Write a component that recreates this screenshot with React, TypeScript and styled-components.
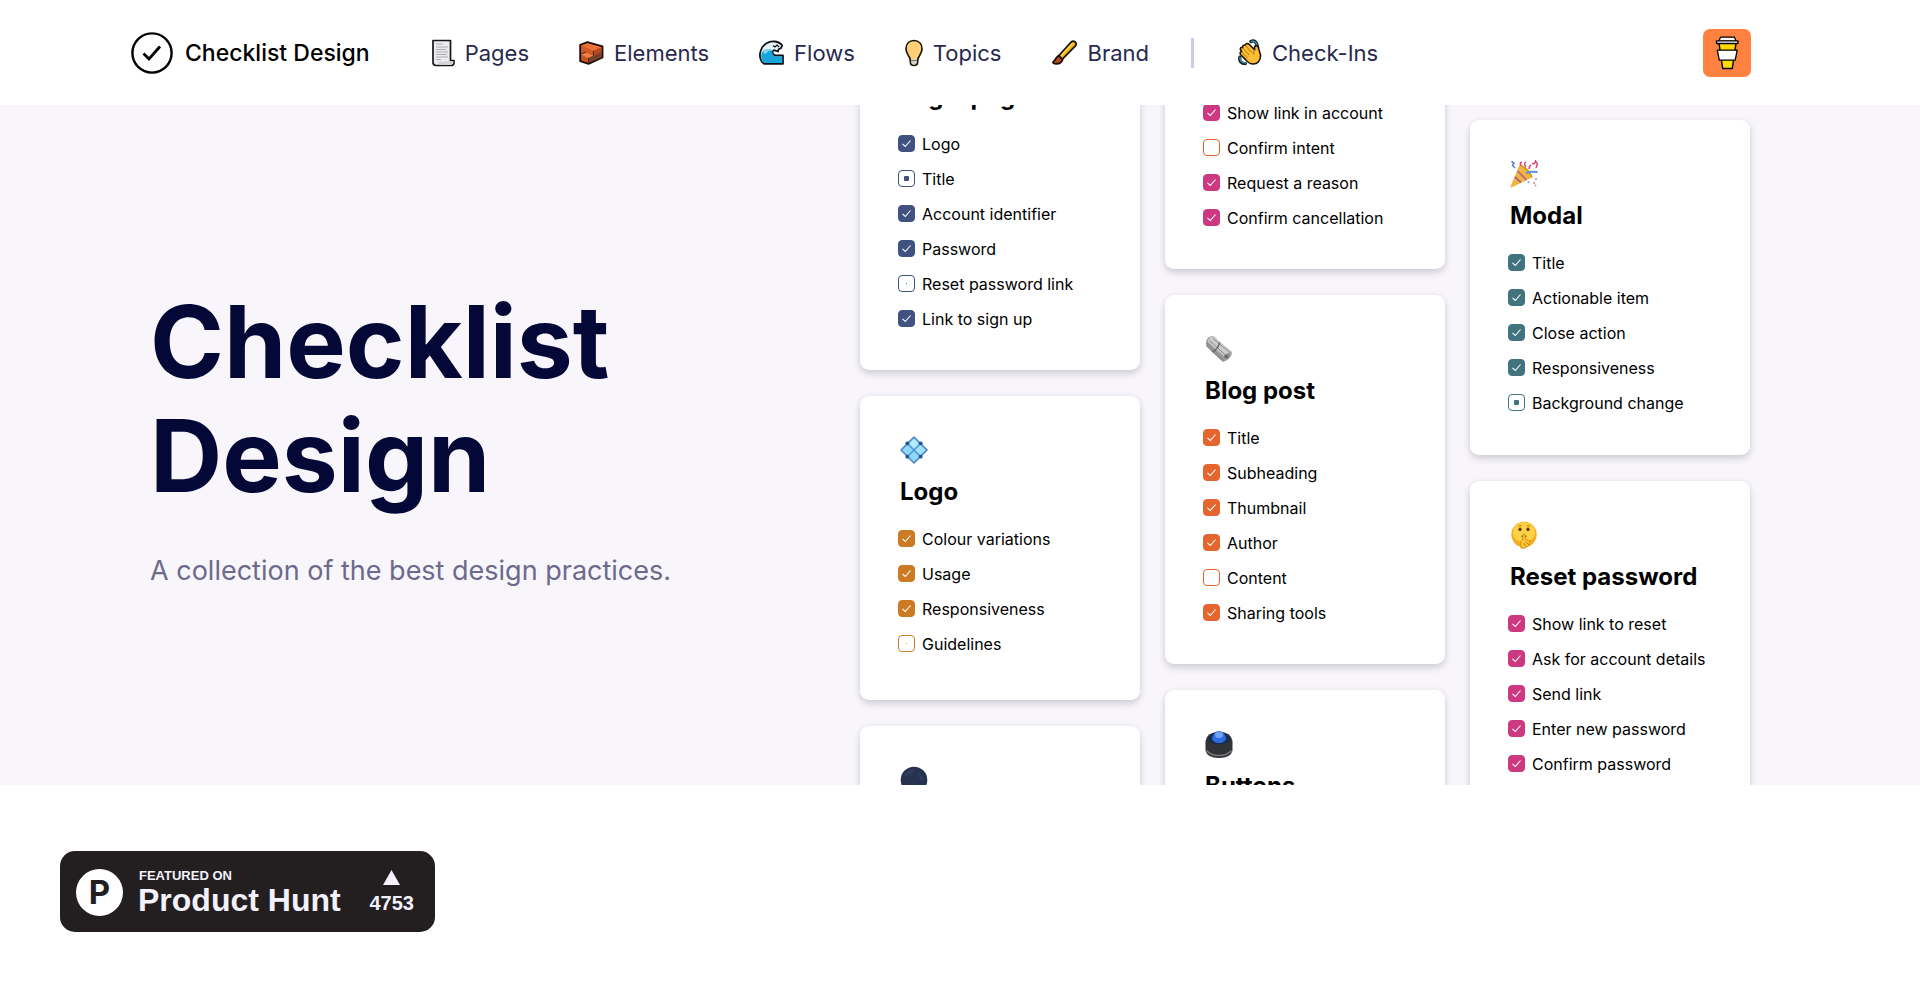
import React, { useId, type ReactNode } from "react";
import styled, { createGlobalStyle } from "styled-components";

const GlobalStyle = createGlobalStyle`
  *, *::before, *::after { box-sizing: border-box; }
  body {
    margin: 0;
    background: #fff;
    color: #000;
    font-family: Inter, "Liberation Sans", sans-serif;
  }
`;

const Page = styled.div`
  display: flex;
  flex-direction: column;
  height: 100vh;
  min-height: 800px;
`;

/* ---------- header ---------- */

const Header = styled.header`
  display: flex;
  align-items: center;
  flex: none;
  height: 105px;
  padding: 0 169px 0 131px;
  background: #fff;
`;

const Brand = styled.a`
  display: flex;
  align-items: center;
  gap: 12px;
  margin-right: 62px;
  color: #000;
  font-size: 23px;
  font-weight: 500;
  line-height: 32px;
  text-decoration: none;
  white-space: nowrap;
`;

const Nav = styled.nav`
  display: flex;
  align-items: center;
  gap: 50px;
`;

const NavLink = styled.a`
  display: flex;
  align-items: center;
  gap: 10px;
  color: #27294f;
  font-size: 22px;
  line-height: 32px;
  text-decoration: none;
  white-space: nowrap;
`;

const Divider = styled.span`
  width: 3px;
  height: 30px;
  margin: 0 -6px 0 -8px;
  background: #cdc8f1;
`;

const CoffeeButton = styled.button`
  display: grid;
  place-items: center;
  width: 48px;
  height: 48px;
  margin-left: auto;
  padding: 0;
  border: 0;
  border-radius: 7px;
  background: #ff813f;
  cursor: pointer;
`;

/* ---------- hero ---------- */

const Hero = styled.main`
  display: grid;
  grid-template-columns: minmax(0, 71fr) minmax(0, 89fr);
  flex: 1;
  min-height: 0;
  padding: 0 170px 0 150px;
  overflow: hidden;
  background: #f8f6fb;
`;

const Intro = styled.section`
  display: flex;
  flex-direction: column;
  justify-content: center;
  gap: 42px;
  height: 100%;
  padding-bottom: 18px;
`;

const Title = styled.h1`
  max-width: 560px;
  margin: 0;
  color: #040836;
  font-size: 100px;
  font-weight: 700;
  line-height: 114px;
`;

const Tagline = styled.p`
  margin: 0;
  color: #6c6a8c;
  font-size: 27px;
  line-height: 32px;
`;

const Board = styled.div`
  display: grid;
  grid-template-columns: repeat(3, minmax(0, 1fr));
  align-items: start;
  gap: 25px;
  height: 100%;
  min-height: 0;
`;

const Column = styled.div<{ $shift: number }>`
  display: flex;
  flex-direction: column;
  gap: 26px;
  margin-top: ${(p) => p.$shift}px;
`;

const Card = styled.article<{ $minHeight?: number }>`
  min-height: ${(p) => p.$minHeight ?? 0}px;
  padding: 40px 16px 34px 38px;
  border-radius: 9px;
  background: #fff;
  box-shadow: 0 4px 7px rgba(30, 25, 50, 0.16), 0 0 6px rgba(30, 25, 50, 0.05);
`;

const CardIcon = styled.div`
  height: 28px;
  padding-left: 2px;
`;

const CardTitle = styled.h2`
  margin: 12px 0 13px;
  padding-left: 2px;
  font-size: 24px;
  font-weight: 700;
  line-height: 32px;
  white-space: nowrap;
`;

const List = styled.ul`
  margin: 0;
  padding: 0;
  list-style: none;
`;

const Row = styled.li`
  display: flex;
  align-items: center;
  gap: 7px;
  height: 35px;
`;

const RowLabel = styled.label`
  font-size: 16px;
  line-height: 24px;
  white-space: nowrap;
`;

const BoxWrap = styled.span`
  display: grid;
  place-items: center;
  width: 17px;
  height: 17px;

  & > * {
    grid-area: 1 / 1;
  }
  & > svg {
    pointer-events: none;
  }
`;

const Box = styled.input<{ $color: string; $filled: boolean }>`
  appearance: none;
  width: 17px;
  height: 17px;
  margin: 0;
  border: 1px solid ${(p) => p.$color};
  border-radius: 4px;
  background: ${(p) => (p.$filled ? p.$color : "#fff")};
`;

const Core = styled.i<{ $color: string; $size: number }>`
  width: ${(p) => p.$size}px;
  height: ${(p) => p.$size}px;
  border-radius: 1px;
  background: ${(p) => p.$color};
  pointer-events: none;
`;

/* ---------- footer badge ---------- */

const Footer = styled.footer`
  display: flex;
  flex: none;
  padding: 66px 60px 60px;
  background: #fff;
`;

const Badge = styled.a`
  display: flex;
  align-items: center;
  width: 375px;
  height: 81px;
  padding: 2px 21px 0 16px;
  border-radius: 15px;
  background: #231f20;
  color: #f3f1fb;
  font-family: "Liberation Sans", Arial, sans-serif;
  font-weight: 700;
  text-decoration: none;
`;

const BadgeLogo = styled.span`
  display: grid;
  place-items: center;
  width: 47px;
  height: 47px;
  border-radius: 50%;
  background: #fff;
  color: #231f20;
  font-family: Inter, sans-serif;
  font-size: 33px;
  line-height: 47px;
`;

const BadgeText = styled.span`
  display: flex;
  flex-direction: column;
  margin-left: 15px;
  white-space: nowrap;
`;

const BadgeSmall = styled.span`
  padding-left: 1px;
  font-size: 13px;
  line-height: 15px;
`;

const BadgeName = styled.span`
  font-size: 32px;
  line-height: 34px;
`;

const Votes = styled.span`
  display: flex;
  flex-direction: column;
  align-items: center;
  gap: 6px;
  margin-left: auto;
  font-size: 20px;
  line-height: 24px;
`;

/* ---------- drawings ---------- */

const LogoMark = () => (
  <svg width="42" height="42" viewBox="0 0 42 42" fill="none" stroke="#000" aria-hidden="true">
    <circle cx="21" cy="21" r="19.6" strokeWidth="2.4" />
    <path d="M12.500 21.500l5.500 5.500L29 14.500" strokeWidth="2.800" />
  </svg>
);

const PageIcon = () => (
  <svg width="23" height="28" viewBox="1 0 23 28" aria-hidden="true">
    <path d="M2 1.500h17.500v20H23v2.500q-.5 2.500-3 2.500H5q-3 0-3-3z" fill="#ececef" stroke="#16161a" strokeWidth="1.700" strokeLinejoin="round" />
    <path d="M7.500 22.500H22.500q0 3.500-3.500 3.500H9q-1.500-1-1.500-3.500z" fill="#d2d2d6" />
    <path d="M5 5h7M5 8h12M5 10.500h10M5 13h12M5 15.500h11M5 18h12M5 20.500h5" stroke="#adadb2" strokeWidth="1" />
  </svg>
);

const BrickIcon = () => (
  <svg width="25" height="24" viewBox="0 0 25 24" strokeLinejoin="round" aria-hidden="true">
    <path d="M1.200 4L8.500 1.200l15 4.300v11L9.500 22.800l-8.300-2.600z" fill="#c9521f" stroke="#1d0f0b" strokeWidth="1.900" />
    <path d="M2 4.500l6.500-2.300 14 4-8 3.800z" fill="#ea7238" />
    <path d="M2 5l12.500 5v4.500L8 11.500l-6 1.800z" fill="#d05a26" />
    <path d="M14.500 10l8-3.800v4.500l-8 4.200z" fill="#b44a1f" />
    <path d="M2 13.600l5-2 7 3-5 2.400z" fill="#f08048" />
    <path d="M9.500 17l13-5.800V16L9.500 21.800z" fill="#74402d" />
    <path d="M1.200 13l5.800-2M14.500 10v4.500M9.500 17v5.500" fill="none" stroke="#45200f" strokeWidth=".9" />
  </svg>
);

const WaveIcon = () => (
  <svg width="25" height="25" viewBox="0 0 25 25" strokeLinejoin="round" aria-hidden="true">
    <path d="M24 23.800H5C1 21 0 15.500 1.800 10.500 4 4 10 .6 16 1.500q5 .7 7.200 4l-1.400 2.800-2 .7-.8 2.500-4.200-1.300c-2.600 1.600-1 5 2 5.300h7.200z" fill="#e6f2f8" stroke="#101418" strokeWidth="1.800" />
    <path d="M23.200 23H5.500C2 20.300 1.500 15.500 3 12.500c2-3.800 7-4 10.500-2-1 3.200.5 5.500 3.700 6h6z" fill="#17a3dc" />
    <path d="M3.500 11.500c2-3 6-3 9.500-1-3 0-5.500 1.500-6 4z" fill="#7ed2f0" />
    <path d="M14 5.500l2 1.500 2-2 2 2" fill="none" stroke="#101418" strokeWidth="1.100" />
  </svg>
);

const BulbIcon = () => (
  <svg width="18" height="28" viewBox="1 0 18 28" aria-hidden="true">
    <path d="M10 1.500c5.200 0 8 3.700 8 8.500 0 3.600-2.100 6-3.500 8.500-.8 1.500-.9 3-.9 4.500 0 2.200-1.300 3.500-3.600 3.500S6.400 25.200 6.400 23c0-1.500-.1-3-.9-4.500C4.100 16 2 13.600 2 10c0-4.800 2.800-8.500 8-8.500z" fill="#ffd078" stroke="#17130a" strokeWidth="1.700" />
    <path d="M7.200 20h5.600v3q-.5 2.500-2.800 2.500T7.200 23z" fill="#d3d1c9" />
    <path d="M7.200 21.500h5.600" stroke="#77736a" />
  </svg>
);

const BrushIcon = () => (
  <svg width="26" height="27" viewBox="0 0 28 28" strokeLinejoin="round" aria-hidden="true">
    <path d="M22 2.500q2-1.500 4 .2t.5 4L12 21.500 8 18z" fill="#f9b71c" stroke="#1b1208" strokeWidth="1.900" />
    <path d="M8 17.500l4.500 4c-1 3.500-4.500 5-8.500 4.500-2-.3-2.500-1.500-1-2.500 2-1.500 2-4 5-6z" fill="#b84a20" stroke="#1b1208" strokeWidth="1.900" />
    <path d="M22.500 4.500L11 17" stroke="#ffdc6b" strokeWidth="1.300" />
  </svg>
);

const HandIcon = () => (
  <svg width="24" height="27" viewBox="0 0 26 28" strokeLinejoin="round" strokeLinecap="round" aria-hidden="true">
    <path d="M14 2q4-2 6 2.500t1 5M2 19q-1 7 6 7" fill="none" stroke="#10242b" strokeWidth="3.600" />
    <path d="M14.500 2q4-1 5.500 2.500t1 5M2 19q0 6 6 6.500" fill="none" stroke="#4193a5" strokeWidth="1.400" />
    <path d="M2.500 10.500q0-2.500 2.500-2 0-3 3-2.500 1-3 4-1l6 6V7.500q3-2 4 1l2.500 8.500c0 6-3.500 9.500-8 9.500-4 0-6-2-8-4.500L3 16.500q-2-2.500 1-3.500z" fill="#fdbd33" stroke="#191307" strokeWidth="1.700" />
    <path d="M5 9l7 7.500M8 6.500l7 7.500M4 13.500l6 6M18 11q-2 3-1 5" fill="none" stroke="#a66d12" strokeWidth="1" />
  </svg>
);

const CupIcon = () => (
  <svg width="24" height="34" viewBox="0 0 24 34" stroke="#000" strokeLinejoin="round" aria-hidden="true">
    <path d="M4 7h17l-3.700 25.500H7.700z" fill="#ffdd00" strokeWidth="1.400" />
    <path d="M5.500 1.200h14L21 5H4z" fill="#fff" strokeWidth="1.200" />
    <path d="M1.500 4.800h21.500v2.700H1.500z" fill="#fff" strokeWidth="1.300" />
    <path d="M2.300 14.200h19.900l-2 10H4.300z" fill="#fff" strokeWidth="1.300" />
  </svg>
);

const CardSvg = ({ children }: { children: ReactNode }) => (
  <svg width="28" height="28" viewBox="0 0 28 28" aria-hidden="true">{children}</svg>
);

const DiamondIcon = () => (
  <CardSvg>
    <path d="M14 1L27 14 14 27 1 14z" fill="#8fd8f8" stroke="#4b86c8" strokeWidth="1.600" strokeLinejoin="round" />
    <path d="M7.500 7.500l13 13M20.500 7.500l-13 13" stroke="#4f94d0" strokeWidth="1.500" />
    <path d="M14 3l4.800 4.800L14 12.600 9.200 7.800z" fill="#b3ebff" />
    <path d="M20.200 9.200l4.800 4.800-4.800 4.800-4.800-4.800z" fill="#a3e0fc" />
    <g fill="#21519b">
      <circle cx="7.300" cy="7.300" r="1.900" />
      <circle cx="20.700" cy="7.300" r="1.900" />
      <circle cx="7.300" cy="20.700" r="1.900" />
      <circle cx="20.700" cy="20.700" r="1.900" />
    </g>
  </CardSvg>
);

const MoonIcon = () => (
  <CardSvg>
    <circle cx="14" cy="14" r="13.300" fill="#27324f" />
    <path d="M5 8q4-5 9-4-1 4-4 4t-5 4zM17 6q6 2 7 9-4 0-5-4t-2-5z" fill="#2f3d60" />
  </CardSvg>
);

const NewspaperIcon = () => (
  <CardSvg>
    <path d="M1 7Q2 1 8 1q3 1 5 4.500L26.500 16.500q1 2-.8 5T18 27L8.500 18.500 1 11z" fill="#9f9f9f" />
    <path d="M8 1.500q3 1.500 5 4.500l12.500 10-6.500 5L2.500 6.500Q4 2 8 1.500z" fill="#cdcdcd" />
    <path d="M2 8l17 17.500M4.500 5.500L21 20.500M8 3.500L24 17M2 10.500L18 26" stroke="#7e7e7e" strokeWidth=".9" fill="none" />
    <path d="M14.500 7.500q-1 6-7 9.500" stroke="#626262" strokeWidth="1.500" fill="none" />
    <circle cx="21.500" cy="21.500" r="2.300" fill="#707070" />
  </CardSvg>
);

const ButtonIcon = () => (
  <CardSvg>
    <path d="M.5 11Q2 2 14 2t13.500 9v9.500Q26 28 14 28T.5 20.500z" fill="#303236" />
    <path d="M1.500 20.500q4 5 12.500 5t12.500-5" stroke="#75777b" strokeWidth="1.700" fill="none" />
    <ellipse cx="14" cy="8.500" rx="11.500" ry="6" fill="#1c2c4c" />
    <path d="M7 9Q8.500 1 14 1t7 8q-2 4-7 4T7 9z" fill="#2d6fe3" />
    <ellipse cx="14" cy="5" rx="4" ry="3" fill="#76a4f5" />
  </CardSvg>
);

const PartyIcon = () => (
  <CardSvg>
    <path d="M9.500 5q8 3 12.500 12.500L1.500 27.500q-1.300-.3-.8-1.500z" fill="#f0b53e" />
    <path d="M7.500 11l9 9M5 17l6 5.500" stroke="#b0628c" strokeWidth="1.700" />
    <path d="M10 5q8 3 12 12.500" fill="none" stroke="#d49a2a" strokeWidth="1.800" />
    <path d="M16 13q5-2 11.500-1" fill="none" stroke="#5f90e0" strokeWidth="2" />
    <path d="M11 5.500q-2-2.500 1-3.500M16 7q-3-3 0-5M19 9q0-3 2-4M22 3.500q3 1 3.500-2.500l2 3-1.500 4" fill="none" stroke="#d8457e" strokeWidth="1.500" />
    <path d="M1.500 1.500L4 3 2.500 5.500 5 8" fill="none" stroke="#4e7fd6" strokeWidth="1.500" />
    <g fill="#d98a9f">
      <circle cx="26" cy="19" r="1.100" />
      <circle cx="24" cy="23" r="1.100" />
      <circle cx="25.500" cy="25.500" r=".9" />
    </g>
    <circle cx="18.500" cy="22" r="1.100" fill="#7ba3df" />
  </CardSvg>
);

const ShushIcon = () => (
  <CardSvg>
    <circle cx="14" cy="13.500" r="12.700" fill="#f3ae22" />
    <ellipse cx="14" cy="11.500" rx="11" ry="10" fill="#ffd144" />
    <path d="M8.500 5.500q1.500-1.300 3-.8M17 4.700q1.500-.5 3 .8" stroke="#b87415" fill="none" />
    <ellipse cx="10" cy="8.300" rx="1.600" ry="1.900" fill="#5f3a12" />
    <ellipse cx="18" cy="8.300" rx="1.600" ry="1.900" fill="#5f3a12" />
    <path d="M11.500 15.500q2.500-1.500 5 0" stroke="#7a4713" strokeWidth="1.200" fill="none" />
    <path d="M13 13.500q1.200-1.500 2 0l.3 5 5 1.500-2 5q-3 3-7.300 2.200L10.500 21l2-2z" fill="#ffc933" stroke="#c98113" strokeWidth=".8" />
    <path d="M15.500 20.500l3 3.200M13.500 22l2.500 3.500" stroke="#a66c12" strokeWidth=".8" />
  </CardSvg>
);

/* ---------- data ---------- */

type State = "on" | "half" | "dot" | "off";
interface Item {
  label: string;
  state?: State;
  color?: string;
}
interface CardData {
  title?: string;
  color: string;
  icon?: ReactNode;
  minHeight?: number;
  items: Item[];
}

const ORANGE = "#e4652d";
const PINK = "#cd3980";

const columns: { shift: number; cards: CardData[] }[] = [
  {
    shift: -104,
    cards: [
      {
        title: "Login page",
        color: "#40527f",
        items: [
          { label: "Logo" },
          { label: "Title", state: "half" },
          { label: "Account identifier" },
          { label: "Password" },
          { label: "Reset password link", state: "dot" },
          { label: "Link to sign up" },
        ],
      },
      {
        title: "Logo",
        color: "#cb7b23",
        icon: <DiamondIcon />,
        minHeight: 304,
        items: [
          { label: "Colour variations" },
          { label: "Usage" },
          { label: "Responsiveness" },
          { label: "Guidelines", state: "dot" },
        ],
      },
      { color: "#40527f", icon: <MoonIcon />, items: [] },
    ],
  },
  {
    shift: -78,
    cards: [
      {
        color: PINK,
        items: [
          { label: "Show link in account" },
          { label: "Confirm intent", state: "off", color: ORANGE },
          { label: "Request a reason" },
          { label: "Confirm cancellation" },
        ],
      },
      {
        title: "Blog post",
        color: ORANGE,
        icon: <NewspaperIcon />,
        items: [
          { label: "Title" },
          { label: "Subheading" },
          { label: "Thumbnail" },
          { label: "Author" },
          { label: "Content", state: "off" },
          { label: "Sharing tools" },
        ],
      },
      { title: "Buttons", color: "#40527f", icon: <ButtonIcon />, items: [] },
    ],
  },
  {
    shift: 15,
    cards: [
      {
        title: "Modal",
        color: "#41747e",
        icon: <PartyIcon />,
        minHeight: 335,
        items: [
          { label: "Title" },
          { label: "Actionable item" },
          { label: "Close action" },
          { label: "Responsiveness" },
          { label: "Background change", state: "half" },
        ],
      },
      {
        title: "Reset password",
        color: PINK,
        icon: <ShushIcon />,
        items: [
          { label: "Show link to reset" },
          { label: "Ask for account details" },
          { label: "Send link" },
          { label: "Enter new password" },
          { label: "Confirm password" },
        ],
      },
    ],
  },
];

const links: { label: string; icon: ReactNode }[] = [
  { label: "Pages", icon: <PageIcon /> },
  { label: "Elements", icon: <BrickIcon /> },
  { label: "Flows", icon: <WaveIcon /> },
  { label: "Topics", icon: <BulbIcon /> },
  { label: "Brand", icon: <BrushIcon /> },
];

function CheckRow({ label, state = "on", color }: Item & { color: string }) {
  const id = useId();
  return (
    <Row>
      <BoxWrap>
        <Box id={id} type="checkbox" checked={state === "on"} readOnly $color={color} $filled={state === "on"} />
        {state === "on" && (
          <svg width="11" height="11" viewBox="0 0 11 11" fill="none" stroke="#fff" strokeWidth="1.100" aria-hidden="true">
            <path d="M1.500 5.800l2.800 2.700L9.500 2.500" />
          </svg>
        )}
        {state === "half" && <Core $color={color} $size={5} />}
        {state === "dot" && <Core $color={color} $size={1} />}
      </BoxWrap>
      <RowLabel htmlFor={id}>{label}</RowLabel>
    </Row>
  );
}

export default function App() {
  return (
    <Page>
      <GlobalStyle />
      <Header>
        <Brand href="#">
          <LogoMark />
          Checklist Design
        </Brand>
        <Nav>
          {links.map((l) => (
            <NavLink key={l.label} href="#">
              {l.icon}
              {l.label}
            </NavLink>
          ))}
          <Divider />
          <NavLink href="#">
            <HandIcon />
            Check-Ins
          </NavLink>
        </Nav>
        <CoffeeButton aria-label="Buy a coffee">
          <CupIcon />
        </CoffeeButton>
      </Header>
      <Hero>
        <Intro>
          <Title>Checklist Design</Title>
          <Tagline>A collection of the best design practices.</Tagline>
        </Intro>
        <Board>
          {columns.map((col, i) => (
            <Column key={i} $shift={col.shift}>
              {col.cards.map((card, j) => (
                <Card key={j} $minHeight={card.minHeight}>
                  <CardIcon>{card.icon}</CardIcon>
                  {card.title && <CardTitle>{card.title}</CardTitle>}
                  <List>
                    {card.items.map((item) => (
                      <CheckRow key={item.label} {...item} color={item.color ?? card.color} />
                    ))}
                  </List>
                </Card>
              ))}
            </Column>
          ))}
        </Board>
      </Hero>
      <Footer>
        <Badge href="#">
          <BadgeLogo>P</BadgeLogo>
          <BadgeText>
            <BadgeSmall>FEATURED ON</BadgeSmall>
            <BadgeName>Product Hunt</BadgeName>
          </BadgeText>
          <Votes>
            <svg width="17" height="15" viewBox="0 0 17 15" fill="#f3f1fb" aria-hidden="true">
              <path d="M8.500 0L17 15H0z" />
            </svg>
            4753
          </Votes>
        </Badge>
      </Footer>
    </Page>
  );
}
